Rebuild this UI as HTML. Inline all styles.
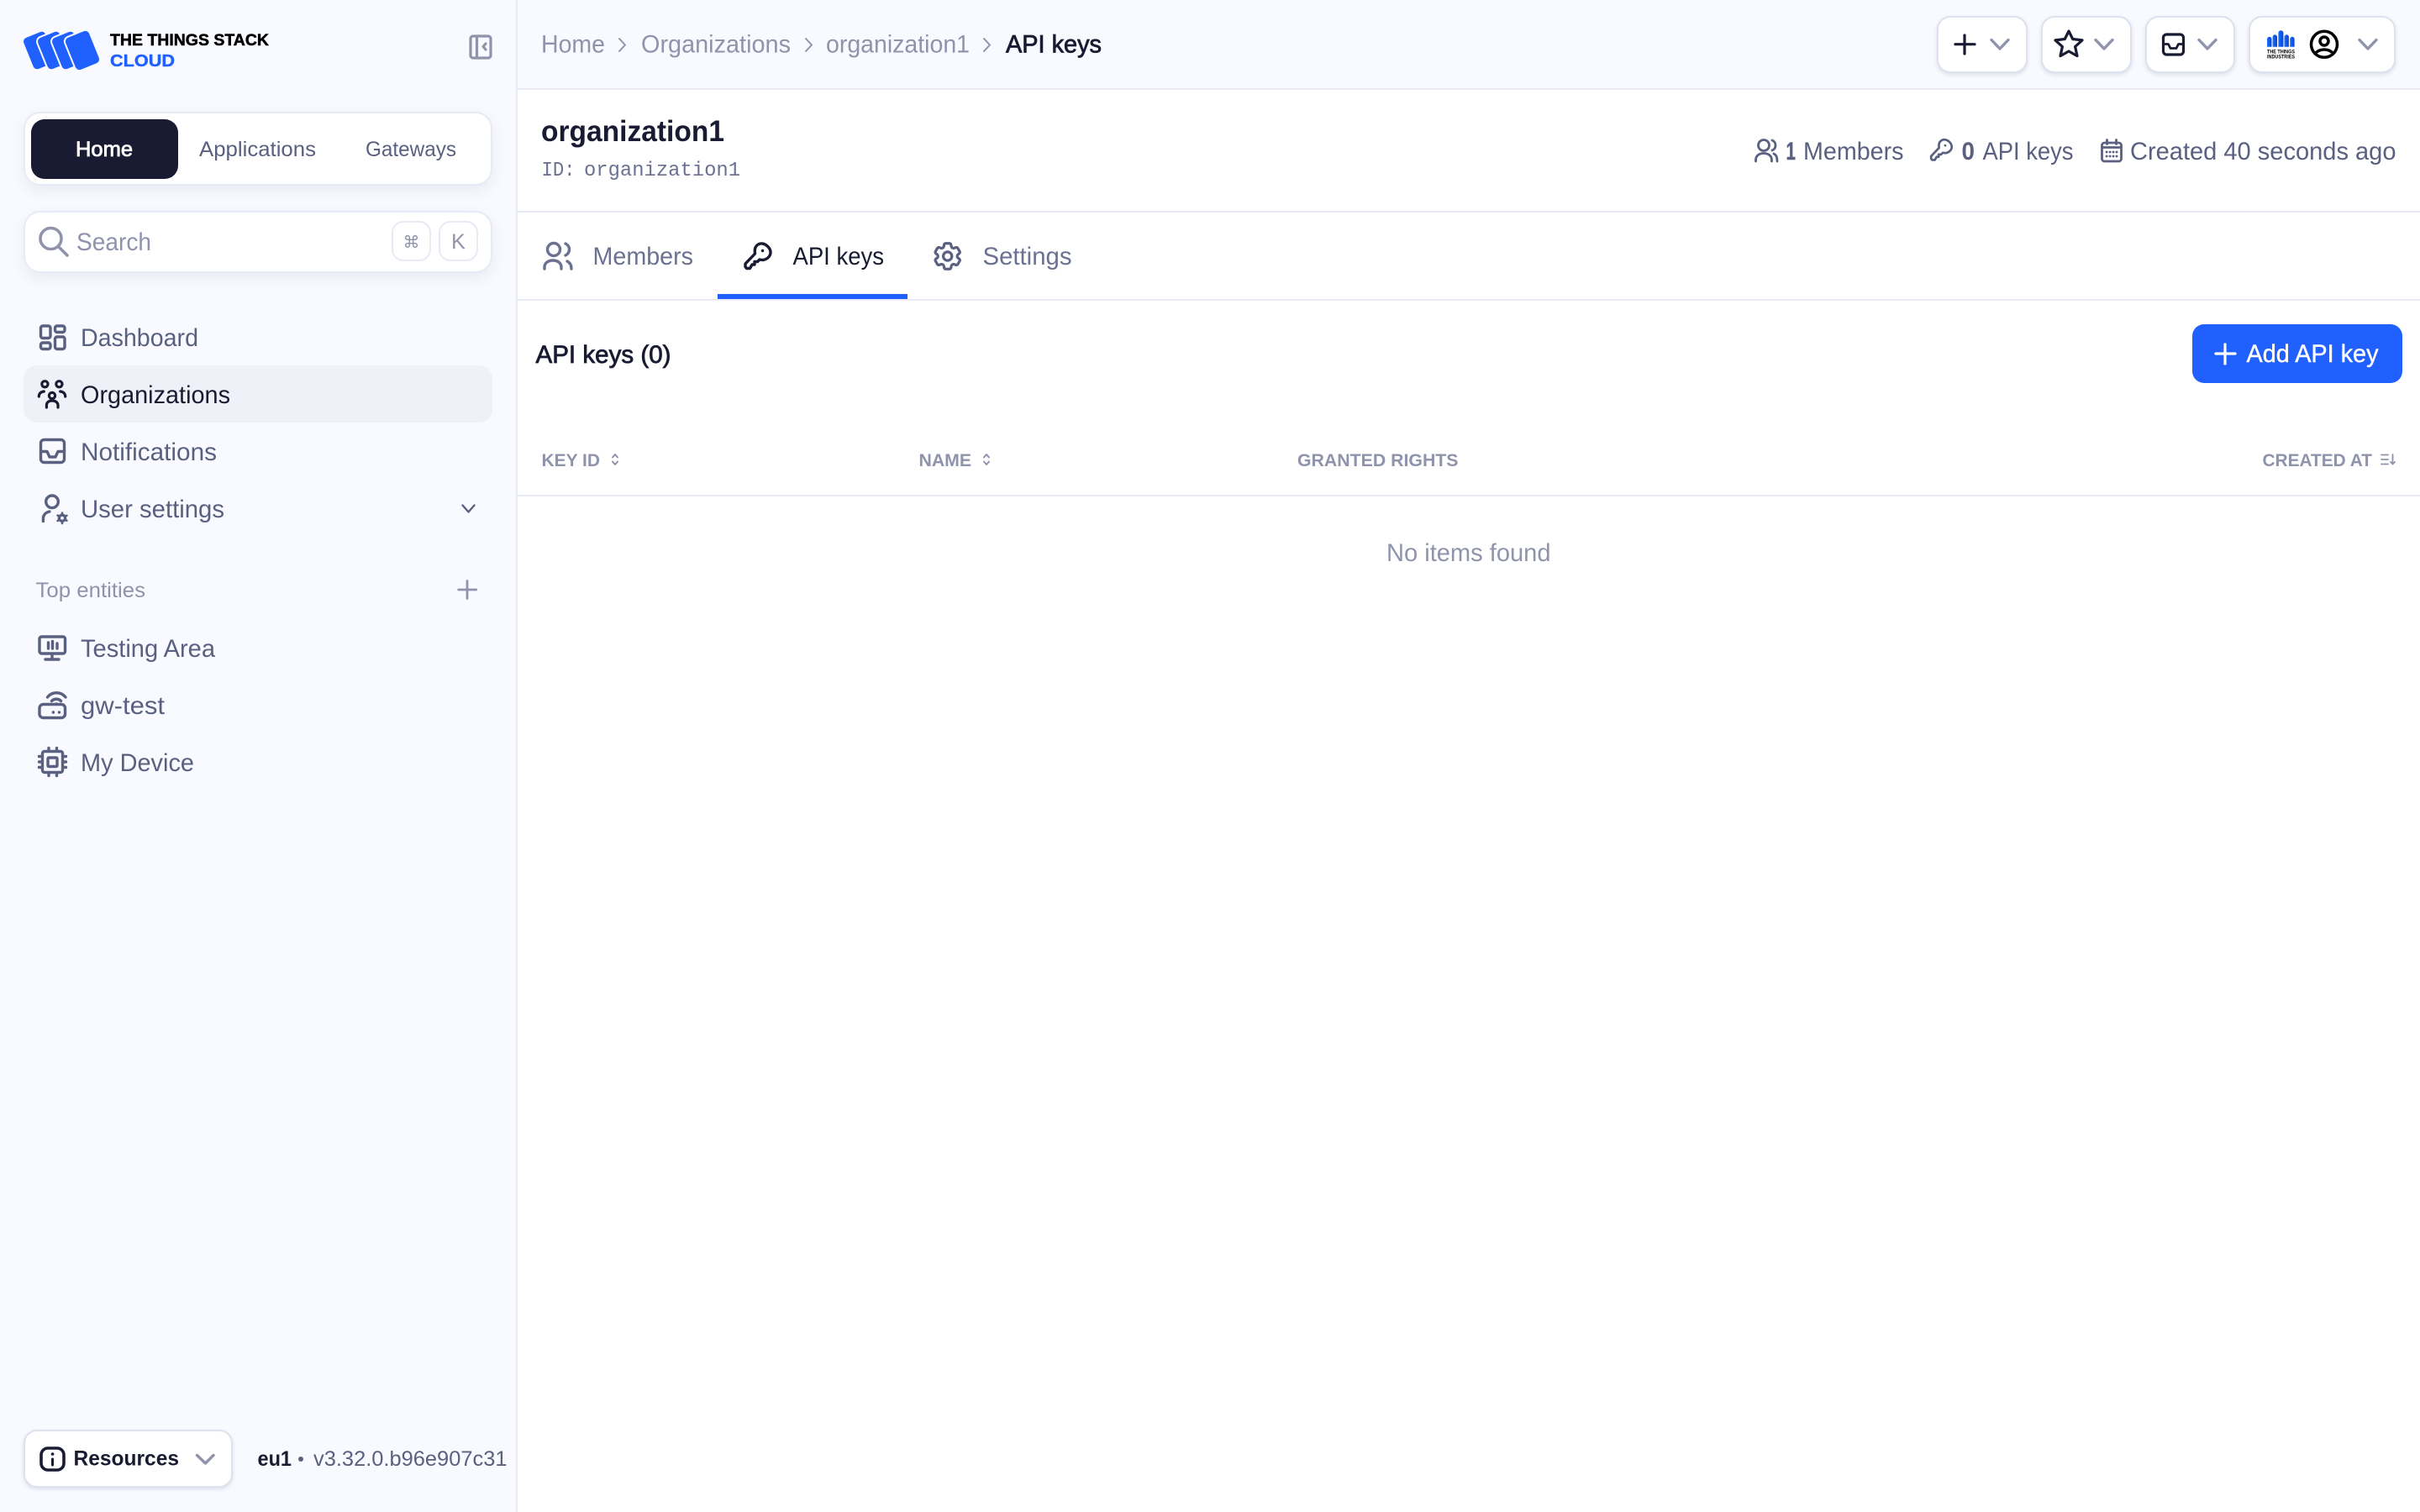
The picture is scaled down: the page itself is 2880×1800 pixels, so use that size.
<!DOCTYPE html>
<html lang="en"><head><meta charset="utf-8"><title>API keys - The Things Stack</title>
<style>
html,body{margin:0;padding:0;width:2880px;height:1800px;overflow:hidden;background:#fff;font-family:"Liberation Sans",sans-serif}
.b{position:absolute;box-sizing:border-box}
.card{background:#fff;border:2px solid #e8eaf6;border-radius:20px;box-shadow:0 6px 16px rgba(80,88,130,.09)}
.btn{background:#fff;border:2px solid #dfe1ef;border-radius:16px;box-shadow:0 2px 5px rgba(70,78,120,.16)}
.kbd{background:#fff;border:2px solid #e8eaf6;border-radius:14px}
svg{position:absolute;left:0;top:0}
text{font-family:"Liberation Sans",sans-serif;font-size:29.5px;fill:#5a6080}
.m{stroke:currentColor;stroke-width:.8px}
.d{fill:#181b32;color:#181b32}
.g{fill:#8f93ab}
.l{fill:#6c7192}
.s{font-size:25px}
.t{font-size:21px;fill:#8f93ab;font-weight:bold}
.i{fill:none;stroke:#5a6080;stroke-width:3.4;stroke-linecap:round;stroke-linejoin:round}
.ig{fill:none;stroke:#8f93ab;stroke-width:3.2;stroke-linecap:round;stroke-linejoin:round}
.id{fill:none;stroke:#181b32;stroke-width:3.6;stroke-linecap:round;stroke-linejoin:round}
</style></head><body>
<div class="b" style="left:0;top:0;width:614px;height:1800px;background:#f8faff"></div>
<div class="b" style="left:614px;top:0;width:2px;height:1800px;background:#e8eaf6"></div>
<div class="b" style="left:616px;top:0;width:2264px;height:105px;background:#f8faff"></div>
<div class="b" style="left:616px;top:105px;width:2264px;height:2px;background:#e8eaf6"></div>
<div class="b" style="left:616px;top:251px;width:2264px;height:2px;background:#e8eaf6"></div>
<div class="b" style="left:616px;top:356px;width:2264px;height:2px;background:#e8eaf6"></div>
<div class="b" style="left:854px;top:350px;width:226px;height:6px;background:#2060ff"></div>
<div class="b" style="left:616px;top:589px;width:2264px;height:2px;background:#e8eaf6"></div>
<div class="b card" style="left:28px;top:133px;width:558px;height:88px"></div>
<div class="b" style="left:37px;top:142px;width:175px;height:71px;background:#181b32;border-radius:16px"></div>
<div class="b card" style="left:28px;top:251px;width:558px;height:74px"></div>
<div class="b kbd" style="left:466px;top:263px;width:47px;height:48px"></div>
<div class="b kbd" style="left:522px;top:263px;width:47px;height:48px"></div>
<div class="b" style="left:28px;top:435px;width:558px;height:68px;background:#f0f0f8;border-radius:16px"></div>
<div class="b btn" style="left:28px;top:1702px;width:249px;height:69px"></div>
<div class="b btn" style="left:2305px;top:19px;width:108px;height:68px"></div>
<div class="b btn" style="left:2429px;top:19px;width:108px;height:68px"></div>
<div class="b btn" style="left:2553px;top:19px;width:107px;height:68px"></div>
<div class="b btn" style="left:2676px;top:19px;width:175px;height:68px"></div>
<div class="b" style="left:2609px;top:386px;width:250px;height:70px;background:#2060ff;border-radius:14px"></div>

<svg width="2880" height="1800" viewBox="0 0 2880 1800" xmlns="http://www.w3.org/2000/svg">
<defs><linearGradient id="lg" x1="0" y1="0" x2="1" y2="0"><stop offset="0" stop-color="#1b72ff"/><stop offset="1" stop-color="#0b3fd2"/></linearGradient></defs>
<!-- logo -->
<g fill="#2060ff" stroke="#f8faff" stroke-width="2">
<rect x="-15" y="-21" width="30" height="42" rx="6" transform="translate(47 60) rotate(-22)"/>
<rect x="-15" y="-21" width="30" height="42" rx="6" transform="translate(64 60) rotate(-22)"/>
<rect x="-15" y="-21" width="30" height="42" rx="6" transform="translate(81 60) rotate(-22)"/>
<rect x="-16" y="-21.5" width="32" height="43" rx="6" transform="translate(98 60) rotate(-22)"/>
</g>
<text x="131" y="54" font-weight="bold" style="font-size:19px;fill:#000;stroke:#000;stroke-width:.5px" textLength="189" lengthAdjust="spacingAndGlyphs">THE THINGS STACK</text>
<text x="131" y="79" font-weight="bold" style="font-size:20px;fill:#2060ff;stroke:#2060ff;stroke-width:.4px" textLength="77" lengthAdjust="spacingAndGlyphs">CLOUD</text>
<g class="ig"><rect x="560" y="43" width="24" height="26" rx="3"/><path d="M567.5 43v26M578 52l-3 3.5 3 3.5"/></g>

<!-- switch -->
<text x="90" y="186" class="s m" style="fill:#fff;color:#fff" textLength="68" lengthAdjust="spacingAndGlyphs">Home</text>
<text x="237" y="186" class="s" textLength="139" lengthAdjust="spacingAndGlyphs">Applications</text>
<text x="435" y="186" class="s" textLength="108" lengthAdjust="spacingAndGlyphs">Gateways</text>

<!-- search -->
<g class="ig" style="stroke-width:3.6"><circle cx="60.5" cy="284" r="12.5"/><path d="M69.5 293.500 80 304"/></g>
<text x="91" y="298" class="g" textLength="89" lengthAdjust="spacingAndGlyphs">Search</text>
<text x="489.5" y="295" text-anchor="middle" class="g" style="font-family:'DejaVu Sans',sans-serif;font-size:20px">⌘</text>
<text x="545.5" y="296" text-anchor="middle" class="g" style="font-size:25px">K</text>

<!-- nav -->
<g class="i">
<rect x="48.5" y="388" width="11.5" height="14.5" rx="2.5"/><rect x="65.5" y="388" width="11.5" height="7.5" rx="2.5"/>
<rect x="48.5" y="408" width="11.5" height="7.5" rx="2.5"/><rect x="65.5" y="401" width="11.5" height="14.5" rx="2.5"/>
</g>
<text x="96" y="412" textLength="140" lengthAdjust="spacingAndGlyphs">Dashboard</text>
<g class="id" style="stroke-width:3.2">
<circle cx="53.4" cy="457.3" r="3.6"/><circle cx="70.4" cy="457.3" r="3.6"/><circle cx="62" cy="471" r="3.6"/>
<path d="M46.3 472c0-3.6 2.4-5.6 6-6M77.7 472c0-3.6-2.4-5.6-6-6M55.4 485v-2.5c0-3.6 2.8-5.5 6.6-5.5s7 1.9 7 5.5v2.5"/>
</g>
<text x="96" y="480" class="d" textLength="178" lengthAdjust="spacingAndGlyphs">Organizations</text>
<g class="i"><rect x="48.5" y="523.5" width="28" height="27" rx="4"/><path d="M48.5 537.5h7.5l3 6.5h7l3-6.5h7.5"/></g>
<text x="96" y="548" textLength="162" lengthAdjust="spacingAndGlyphs">Notifications</text>
<g class="i"><circle cx="62" cy="597.3" r="7.3"/><path d="M51.4 620.5v-3c0-4.5 3-7.5 7.5-8.5"/><circle cx="74" cy="616.8" r="3.6"/><path d="M74 610.5v2M74 621v2M68.6 613.6l1.8 1M77.6 618.8l1.8 1M68.6 620l1.8-1M77.6 614.8l1.8-1" style="stroke-width:2.6"/></g>
<text x="96" y="616" textLength="171" lengthAdjust="spacingAndGlyphs">User settings</text>
<path class="i" style="stroke-width:2.4" d="M550.5 601.5 557.5 609.5 564.5 601.5"/>

<text x="42.5" y="711" class="g s" textLength="130.500" lengthAdjust="spacingAndGlyphs">Top entities</text>
<path class="ig" style="stroke-width:2.8" d="M545.7 702h21M556 691.5v21"/>

<g class="i"><rect x="47" y="758" width="30.5" height="20" rx="2.5"/><path d="M62 778.5v6M54 785h16M57.5 765v7M62.5 763.5v8.5M68 766v6"/></g>
<text x="96" y="782" textLength="160" lengthAdjust="spacingAndGlyphs">Testing Area</text>
<g class="i"><rect x="47" y="838.500" width="30.5" height="16" rx="4.5"/><path d="M56.500 830c5.500-7 16-7 21.500 0M61.500 834.500c3-3 8-3 11 0"/><path d="M67 838v.5M63.3 848h.1M70.4 848h.1"/></g>
<text x="96" y="850" textLength="100" lengthAdjust="spacingAndGlyphs">gw-test</text>
<g class="i"><rect x="50.5" y="894.5" width="24" height="25" rx="2.5"/><rect x="57" y="902" width="11" height="10.5" rx="1"/><path d="M58 890.5v2M67.5 890.5v2M58 921.5v2M67.5 921.5v2M46.5 900.5h2M46.5 907h2M46.5 913.5h2M76.5 900.5h2M76.5 907h2M76.5 913.5h2"/></g>
<text x="96" y="918" textLength="135" lengthAdjust="spacingAndGlyphs">My Device</text>

<!-- resources -->
<g class="id"><rect x="49" y="1724" width="27" height="26" rx="8"/><path d="M62.5 1737v7" style="stroke-width:3"/><path d="M62.5 1731h.1"/></g>
<text x="87.500" y="1744.5" font-weight="bold" class="d s" textLength="125.500" lengthAdjust="spacingAndGlyphs">Resources</text>
<path class="ig" style="stroke-width:3.4" d="M234.5 1732.5 244.5 1742 254 1732.5"/>
<text x="306.500" y="1745" font-weight="bold" class="d s" textLength="40.500" lengthAdjust="spacingAndGlyphs">eu1</text>
<circle cx="358" cy="1737" r="3" fill="#5a6080"/>
<text x="373" y="1745" class="s" textLength="230.500" lengthAdjust="spacingAndGlyphs">v3.32.0.b96e907c31</text>

<!-- breadcrumbs -->
<text x="644" y="62.500" class="g" textLength="76" lengthAdjust="spacingAndGlyphs">Home</text>
<path class="ig" style="stroke-width:2" d="M737 46l7 7.5-7 7.5"/>
<text x="763" y="62.500" class="g" textLength="178" lengthAdjust="spacingAndGlyphs">Organizations</text>
<path class="ig" style="stroke-width:2" d="M959 46l7 7.5-7 7.5"/>
<text x="983" y="62.500" class="g" textLength="171" lengthAdjust="spacingAndGlyphs">organization1</text>
<path class="ig" style="stroke-width:2" d="M1171 46l7 7.5-7 7.5"/>
<text x="1197" y="62.500" class="d m" textLength="114" lengthAdjust="spacingAndGlyphs">API keys</text>

<!-- header buttons -->
<path class="id" style="stroke-width:3.2" d="M2327 52.7h23M2338 42v22"/>
<path class="ig" style="stroke-width:3.4" d="M2370 47.5l10 10.5 10-10.5"/>
<polygon class="id" style="stroke-width:3.2" points="2462,37 2466.7,46.5 2478,47.9 2469.6,55.5 2472,66.6 2462,61 2452,66.6 2454.4,55.5 2446,47.9 2457.3,46.5"/>
<path class="ig" style="stroke-width:3.4" d="M2494 47.5l10 10.5 10-10.5"/>
<g class="id" style="stroke-width:3.2"><rect x="2574.5" y="41" width="24" height="24" rx="4"/><path d="M2574.5 52.5h6l2.5 5h7l2.5-5h6" style="stroke-width:2.8"/></g>
<path class="ig" style="stroke-width:3.4" d="M2617 47.5l10 10.5 10-10.5"/>
<g fill="url(#lg)">
<path d="M2698 55.7V46.5a2.6 2.6 0 0 1 5.4 0v9.2z"/><path d="M2704.6 55.7V44a2.6 2.6 0 0 1 5.4 0v11.7z"/><path d="M2711.4 55.7V39.3a3 3 0 0 1 6 0v16.4z"/><path d="M2718.5 55.7V44a2.6 2.6 0 0 1 5.4 0v11.7z"/><path d="M2725.2 55.7V46.5a2.6 2.6 0 0 1 5.4 0v9.2z"/>
</g>
<text x="2698" y="63.5" font-weight="bold" style="font-size:6.5px;fill:#000" textLength="33" lengthAdjust="spacingAndGlyphs">THE THINGS</text>
<text x="2698" y="69.5" font-weight="bold" style="font-size:6.5px;fill:#000" textLength="33" lengthAdjust="spacingAndGlyphs">INDUSTRIES</text>
<g fill="none" stroke="#000" stroke-width="3.5" stroke-linecap="round"><circle cx="2766" cy="52.8" r="15.5"/><circle cx="2766" cy="49" r="5"/><path d="M2755.5 63.5c3-3.5 6.5-4.5 10.5-4.5s7.5 1 10.5 4.5"/></g>
<path class="ig" style="stroke-width:3.4" d="M2808 47.5l10 10.5 10-10.5"/>

<!-- title -->
<text x="644" y="168" font-weight="bold" style="font-size:35px;fill:#181b32" textLength="218" lengthAdjust="spacingAndGlyphs">organization1</text>
<text x="644.5" y="209" class="l" style="font-family:'Liberation Mono',monospace;font-size:24px" textLength="40" lengthAdjust="spacingAndGlyphs">ID:</text>
<text x="695" y="209" class="l" style="font-family:'Liberation Mono',monospace;font-size:24px" textLength="186" lengthAdjust="spacingAndGlyphs">organization1</text>

<!-- stats -->
<g class="i" style="stroke-width:2.8"><circle cx="2099" cy="173" r="6.5"/><path d="M2109 167c2.500 1 4 3 4 6s-1.500 5-4 6M2089.500 192v-1.500c0-5 4-8 9.500-8s9.500 3 9.500 8v1.500M2111 183c2.500 1 4 4 4 9"/></g>
<text x="2125.500" y="190" font-weight="bold" style="stroke:#5a6080;stroke-width:.4px" textLength="11.500" lengthAdjust="spacingAndGlyphs">1</text>
<text x="2146" y="190" textLength="119.500" lengthAdjust="spacingAndGlyphs">Members</text>
<g class="i" style="stroke-width:3.300" transform="translate(2296.500 165) scale(.82)"><path d="M13.500 8C14.500 3 19 1 22 1.500 27 2 32 7 32 12 32 17 27 21 22 21L19 20.500 16.500 23H13V26.500H10L7.500 31H3.500L2 29V25.500L13.500 13.500C13.200 11 13.200 9.500 13.500 8Z"/><path d="M22.500 10h.1"/></g>
<text x="2334.500" y="190" font-weight="bold" textLength="15.500" lengthAdjust="spacingAndGlyphs">0</text>
<text x="2359.500" y="190" textLength="108" lengthAdjust="spacingAndGlyphs">API keys</text>
<g class="i" style="stroke-width:2.8"><rect x="2501.500" y="170" width="23" height="22" rx="3"/><path d="M2507.500 166.500v5M2518.500 166.500v5M2501.500 175.500h23"/><path d="M2507 181h.1M2511 181h.1M2515 181h.1M2519 181h.1M2507 186h.1M2511 186h.1M2515 186h.1M2519 186h.1"/></g>
<text x="2535" y="190" textLength="316.500" lengthAdjust="spacingAndGlyphs">Created 40 seconds ago</text>

<!-- tabs -->
<g class="i" style="stroke:#6c7192"><circle cx="659" cy="297" r="7.5"/><path d="M673 290c3 1.500 4.500 4 4.500 7s-1.500 5.500-4.500 7M648 320v-2c0-5 4.500-8 10-8s10 3 10 8v2M675 311c3 1.500 5 4 5 9"/></g>
<text x="705.500" y="315" class="l" textLength="119.500" lengthAdjust="spacingAndGlyphs">Members</text>
<g class="id" style="stroke-width:3.4" transform="translate(885 288.500)"><path d="M13.500 8C14.500 3 19 1 22 1.500 27 2 32 7 32 12 32 17 27 21 22 21L19 20.500 16.500 23H13V26.500H10L7.500 31H3.500L2 29V25.500L13.500 13.500C13.200 11 13.200 9.500 13.500 8Z"/><path d="M22.500 10h.1"/></g>
<text x="943.500" y="315" class="d" textLength="108.500" lengthAdjust="spacingAndGlyphs">API keys</text>
<g transform="translate(1127.700 305) scale(1.700) translate(-12 -12)" fill="none" stroke="#5a6080" stroke-width="1.900" stroke-linejoin="round"><path d="M9.594 3.94c.09-.542.56-.94 1.11-.94h2.593c.55 0 1.02.398 1.11.94l.213 1.281c.063.374.313.686.645.87.074.04.147.083.22.127.325.196.72.257 1.075.124l1.217-.456a1.125 1.125 0 0 1 1.37.49l1.296 2.247a1.125 1.125 0 0 1-.26 1.431l-1.003.827c-.293.241-.438.613-.43.992a7.723 7.723 0 0 1 0 .255c-.008.378.137.75.43.991l1.004.827c.424.35.534.955.26 1.43l-1.298 2.247a1.125 1.125 0 0 1-1.369.491l-1.217-.456c-.355-.133-.75-.072-1.076.124a6.47 6.47 0 0 1-.22.128c-.331.183-.581.495-.644.869l-.213 1.281c-.09.543-.56.94-1.11.94h-2.594c-.55 0-1.019-.398-1.11-.94l-.213-1.281c-.062-.374-.312-.686-.644-.87a6.52 6.52 0 0 1-.22-.127c-.325-.196-.72-.257-1.076-.124l-1.217.456a1.125 1.125 0 0 1-1.369-.49l-1.297-2.247a1.125 1.125 0 0 1 .26-1.431l1.004-.827c.292-.24.437-.613.43-.991a6.932 6.932 0 0 1 0-.255c.007-.38-.138-.751-.43-.992l-1.004-.827a1.125 1.125 0 0 1-.26-1.43l1.297-2.247a1.125 1.125 0 0 1 1.37-.491l1.216.456c.356.133.751.072 1.076-.124.072-.044.146-.086.22-.128.332-.183.582-.495.644-.869l.214-1.28Z"/><circle cx="12" cy="12" r="3"/></g>
<text x="1169.500" y="315" class="l" textLength="106" lengthAdjust="spacingAndGlyphs">Settings</text>

<!-- section -->
<text x="637.500" y="432" class="d m" textLength="161" lengthAdjust="spacingAndGlyphs">API keys (0)</text>
<path fill="none" stroke="#fff" stroke-width="3.2" stroke-linecap="round" d="M2637 421h23M2648 410v23"/>
<text x="2673.500" y="431" class="m" style="fill:#fff;color:#fff;stroke-width:.4px" textLength="157" lengthAdjust="spacingAndGlyphs">Add API key</text>

<!-- table -->
<text x="644.500" y="555" class="t" textLength="69.500" lengthAdjust="spacingAndGlyphs">KEY ID</text>
<path class="ig" style="stroke-width:2" d="M729 544.500l3-3.500 3 3.500M729 549.500l3 3.500 3-3.500"/>
<text x="1093.500" y="555" class="t" textLength="62.500" lengthAdjust="spacingAndGlyphs">NAME</text>
<path class="ig" style="stroke-width:2" d="M1171 544.500l3-3.500 3 3.500M1171 549.500l3 3.500 3-3.500"/>
<text x="1544" y="555" class="t" textLength="191.500" lengthAdjust="spacingAndGlyphs">GRANTED RIGHTS</text>
<text x="2692.500" y="555" class="t" textLength="130.500" lengthAdjust="spacingAndGlyphs">CREATED AT</text>
<path class="ig" style="stroke-width:1.800" d="M2834 541.500h8M2834 547h8M2834 552.500h8M2847.500 541v11.500M2845 550l2.500 2.500 2.500-2.500"/>
<text x="1650" y="668" class="g" textLength="195.500" lengthAdjust="spacingAndGlyphs">No items found</text>
</svg>
</body></html>
